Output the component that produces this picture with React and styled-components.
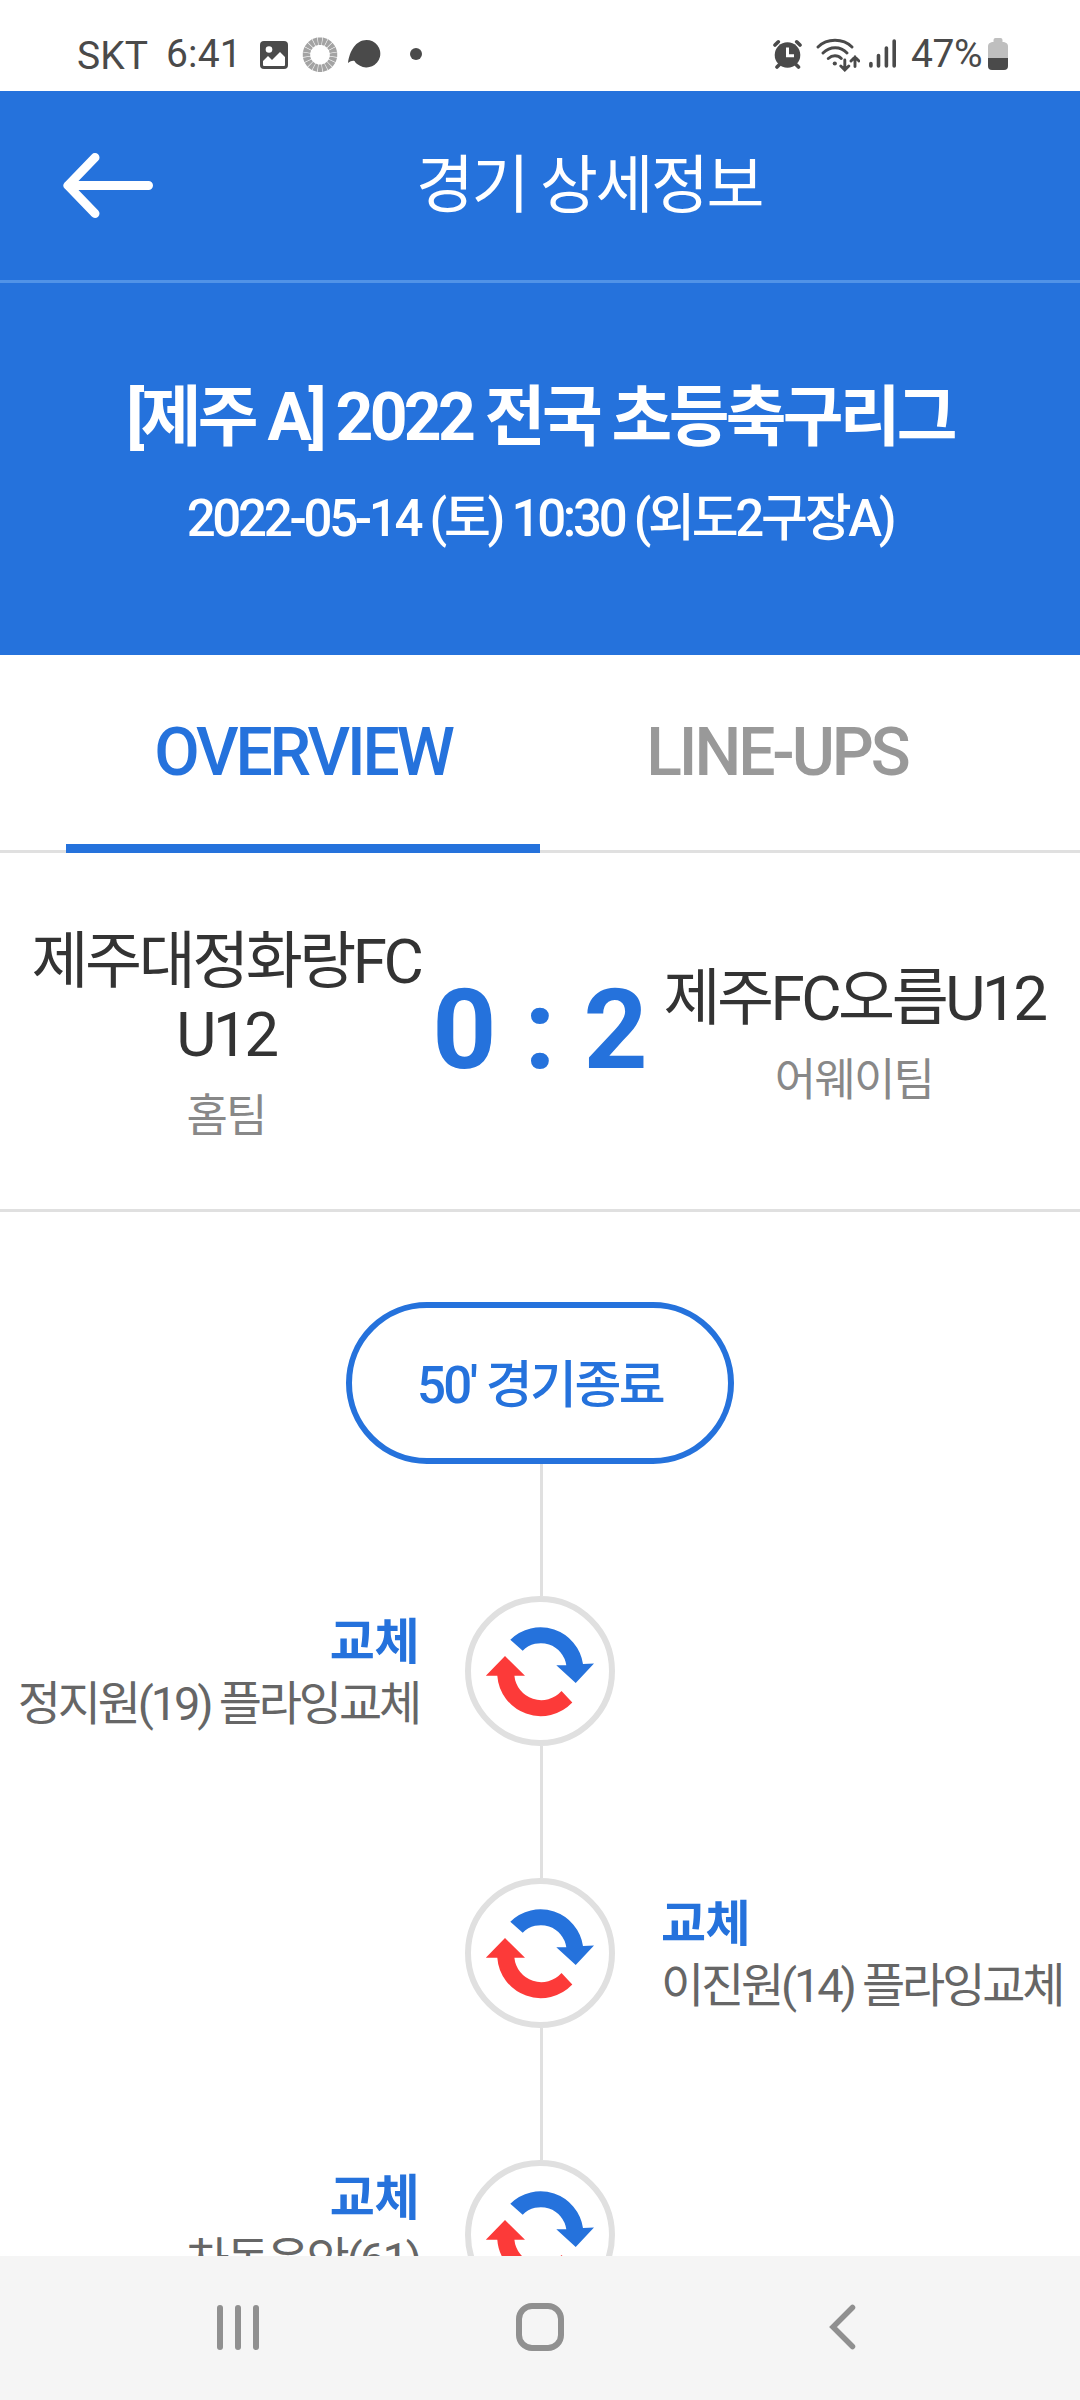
import styled, { createGlobalStyle } from "styled-components";

const GlobalStyle = createGlobalStyle`
  * {
    box-sizing: border-box;
  }

  body {
    margin: 0;

    background-color: #fff;

    font-family: Roboto, "Noto Sans CJK KR", sans-serif;
  }
`;

const Screen = styled.div`
  display: flex;
  flex-direction: column;

  width: 1080px;
  height: 2400px;

  overflow: hidden;

  background-color: #fff;
`;

const StatusBar = styled.div`
  display: flex;
  flex-shrink: 0;

  height: 91px;

  align-items: center;
  justify-content: space-between;

  padding: 17px 72px 0 77px;

  color: #4a4a4a;

  svg {
    display: block;
  }
`;

const StatusGroup = styled.div`
  display: flex;

  align-items: center;
`;

const StatusIcon = styled.span`
  margin-right: ${(props) => props.$gap || 0}px;
`;

const StatusText = styled.span`
  margin-right: ${(props) => props.$gap}px;
  padding-top: ${(props) => props.$drop || 0}px;

  font-size: 39px;
  line-height: 46px;
  letter-spacing: ${(props) => props.$spacing || 0}px;
`;

const Header = styled.header`
  display: grid;
  grid-template-columns: 219px 1fr 121px;
  flex-shrink: 0;

  height: 192px;

  align-items: center;

  border-bottom: 3px solid #5193e7;

  color: #fff;
  background-color: #2572dc;
`;

const BackButton = styled.button`
  width: 100px;

  margin-left: 58px;
  padding: 0;

  border: none;

  background: none;

  svg {
    display: block;
  }
`;

const PageTitle = styled.h1`
  margin: 0;

  font-size: 63px;
  font-weight: 400;
  line-height: 90px;
  letter-spacing: -2.5px;
  text-align: center;
`;

const MatchInfo = styled.section`
  display: flex;
  flex-direction: column;
  flex-shrink: 0;

  height: 372px;

  align-items: center;

  padding-top: 87px;

  color: #fff;
  background-color: #2572dc;

  white-space: nowrap;
`;

const League = styled.h2`
  margin: 0;

  font-size: 66px;
  font-weight: 700;
  line-height: 96px;
  letter-spacing: -3.7px;
`;

const Schedule = styled.p`
  margin: 16px 0 0;

  font-size: 51px;
  font-weight: 500;
  line-height: 74px;
  letter-spacing: -3.3px;
`;

const Tabs = styled.nav`
  display: flex;
  flex-shrink: 0;

  height: 198px;

  padding: 0 66px;

  border-bottom: 3px solid #e0e0e0;
`;

const Tab = styled.button`
  flex: 1;

  height: 198px;

  padding: 6px 0 0;

  border: none;
  border-bottom: 9px solid
    ${(props) => (props.$active ? "#2572dc" : "transparent")};

  color: ${(props) => (props.$active ? "#2572dc" : "#999")};
  background: none;

  font-family: inherit;
  font-size: 66px;
  font-weight: 500;
  letter-spacing: -3.1px;
`;

const ScoreBoard = styled.section`
  display: grid;
  grid-template-columns: 452px 176px 452px;
  flex-shrink: 0;

  height: 359px;

  align-items: center;

  padding-bottom: 2px;

  border-bottom: 3px solid #e0e0e0;
`;

const Team = styled.div`
  padding-top: 15px;

  text-align: center;
`;

const TeamName = styled.div`
  color: #333;

  font-size: 62px;
  line-height: 73px;
  letter-spacing: -3.5px;
`;

const TeamSide = styled.div`
  margin-top: 13px;

  color: #888;

  font-size: 45px;
  line-height: 66px;
  letter-spacing: -1.8px;
`;

const Score = styled.div`
  display: flex;

  justify-content: center;

  color: #2572dc;

  font-size: 112px;
  font-weight: 700;
  line-height: 130px;
  white-space: pre;
`;

const Timeline = styled.section`
  display: flex;
  flex: 1;
  flex-direction: column;

  min-height: 0;

  align-items: center;

  padding-top: 90px;

  overflow: hidden;
`;

const Milestone = styled.div`
  display: flex;
  flex-shrink: 0;

  width: 388px;
  height: 162px;

  align-items: center;
  justify-content: center;

  padding-bottom: 5px;

  border: 6px solid #2572dc;
  border-radius: 81px;

  color: #2572dc;

  font-size: 51px;
  font-weight: 500;
  letter-spacing: -2.6px;
`;

const Connector = styled.div`
  flex-shrink: 0;

  width: 3px;
  height: 132px;

  margin-left: 3px;

  background-color: #e0e0e0;
`;

const EventRow = styled.div`
  display: grid;
  grid-template-columns: 419px 150px 419px;
  flex-shrink: 0;

  height: 150px;

  justify-content: center;
  column-gap: 46px;
`;

const EventBadge = styled.div`
  grid-row: 1;
  grid-column: 2;

  width: 150px;
  height: 150px;

  border: 6px solid #e0e0e0;
  border-radius: 50%;

  svg {
    display: block;

    margin: -6px;
  }
`;

const EventText = styled.div`
  grid-row: 1;
  grid-column: ${(props) => (props.$side === "home" ? 1 : 3)};

  padding-top: ${(props) => (props.$raised ? 8 : 16)}px;

  text-align: ${(props) => (props.$side === "home" ? "right" : "left")};
  white-space: nowrap;
`;

const EventType = styled.div`
  color: #2572dc;

  font-size: 49px;
  font-weight: 700;
  line-height: 62px;
  letter-spacing: -0.5px;
`;

const EventDetail = styled.div`
  color: #666;

  font-size: 47px;
  line-height: 60px;
  letter-spacing: -3.2px;
`;

const NavigationBar = styled.footer`
  display: grid;
  grid-template-columns: 238px 302px 302px 238px;
  flex-shrink: 0;

  height: 144px;

  align-items: center;

  background-color: #f5f5f5;
`;

const NavButton = styled.button`
  display: flex;

  width: 60px;
  height: 60px;

  align-items: center;
  justify-content: center;
  justify-self: end;

  margin-right: -30px;
  padding: 0 0 2px;

  border: none;

  background: none;
`;

function NotificationIcons() {
  const dashes = Array.from({ length: 20 }, (_, i) => i * 18);

  return (
    <svg width="164" height="36" viewBox="260 36 164 36" fill="currentColor">
      <rect x="260" y="41" width="28" height="28" rx="4" />
      <circle cx="269" cy="49.5" r="3.3" fill="#fff" />
      <path
        d="M263 65v-4l5-5 4 4 8-8 5 5v8q0 1-1 1h-20q-1 0-1-1z"
        fill="#fff"
      />
      {dashes.map((angle) => (
        <path
          key={angle}
          d="M317.600 37.500h4.800l-1.100 7.400h-2.600z"
          fill="#a3a3a3"
          transform={`rotate(${angle} 320 54.7)`}
        />
      ))}
      <path d="M348 63c1.500-12 8-23 18.500-23a13.700 13.700 0 1 1-6.500 25.700c-2.300-1-4.500-2.700-5.500-4.700-2-.6-4 .2-6.500 2z" />
      <circle cx="416" cy="54" r="6" />
    </svg>
  );
}

function AlarmIcon() {
  return (
    <svg width="29" height="30" viewBox="770 39 29 30" fill="none">
      <circle cx="784.5" cy="55" r="12.8" fill="currentColor" />
      <g stroke="currentColor" strokeWidth="3.6" strokeLinecap="round">
        <path d="M772 45l3.300-3.200M797 45l-3.300-3.200M776 65l-2 2M793.500 65l2 2" />
      </g>
      <path d="M784.500 47.500v8.300h6.500" stroke="#fff" strokeWidth="3" />
    </svg>
  );
}

function WifiIcon() {
  return (
    <svg
      width="44"
      height="35"
      viewBox="813.5 36 44 35"
      fill="none"
      stroke="currentColor"
      strokeWidth="2.9"
      strokeLinecap="round"
    >
      <path d="M815.500 46c9-9 25-9 34 0M820.500 52c7-7 17.500-7 24 0M825.800 57.500c4-3.700 9.500-3.700 13 0" />
      <circle cx="832.3" cy="62.5" r="2.1" fill="currentColor" stroke="none" />
      <path d="M842.300 59v9.500M838.300 65l4 4 4-4M852.500 65.500V56M848.500 60l4-4 4 4" />
    </svg>
  );
}

function SignalIcon() {
  return (
    <svg
      width="28"
      height="30"
      viewBox="867 39 28 30"
      stroke="currentColor"
      strokeWidth="3.6"
      strokeLinecap="round"
    >
      <path d="M868.900 63.500v2.500M876.500 55.500V66M884.400 48v18M892.200 41v25" />
    </svg>
  );
}

function BatteryIcon() {
  return (
    <svg width="20" height="32" viewBox="0 0 20 32">
      <path
        d="M5.500 2q0-2 2-2h5q2 0 2 2v2h1.500q4 1 4 4v13H0V8q0-3 4-4h1.500z"
        fill="#bfbfbf"
      />
      <path d="M0 20h20v8q0 4-4 4H4q-4 0-4-4z" fill="currentColor" />
    </svg>
  );
}

function SubstitutionIcon() {
  return (
    <svg width="150" height="150" viewBox="0 0 150 150">
      <path
        d="M45.300 43.700A43 43 0 0 1 118 68L129 67.500 110.700 87 91.300 69.300H101.300A25.700 25.700 0 0 0 57.700 54.700Z"
        fill="#2572dc"
      />
      <path
        d="M107.300 106.500A43.500 43.500 0 0 1 32.300 79.700H20.800L40 60 60 79.700H49.400A27 27 0 0 0 96.500 95Z"
        fill="#fc3a39"
      />
    </svg>
  );
}

const events = [
  { id: 1, side: "home", detail: "정지원(19) 플라잉교체" },
  { id: 2, side: "away", detail: "이진원(14) 플라잉교체" },
  { id: 3, side: "home", detail: "차동윤안(61)", raised: true },
];

function MatchEvent({ side, detail, raised }) {
  return (
    <>
      <Connector />
      <EventRow>
        <EventText $side={side} $raised={raised}>
          <EventType>교체</EventType>
          <EventDetail>{detail}</EventDetail>
        </EventText>
        <EventBadge>
          <SubstitutionIcon />
        </EventBadge>
      </EventRow>
    </>
  );
}

function App() {
  return (
    <>
      <GlobalStyle />
      <Screen>
        <StatusBar>
          <StatusGroup>
            <StatusText $gap={18} $drop={4}>
              SKT
            </StatusText>
            <StatusText $gap={18} $spacing={0.2}>
              6:41
            </StatusText>
            <NotificationIcons />
          </StatusGroup>
          <StatusGroup>
            <StatusIcon $gap={14}>
              <AlarmIcon />
            </StatusIcon>
            <StatusIcon $gap={9}>
              <WifiIcon />
            </StatusIcon>
            <StatusIcon $gap={14}>
              <SignalIcon />
            </StatusIcon>
            <StatusText $gap={6} $spacing={-0.5}>
              47%
            </StatusText>
            <StatusIcon>
              <BatteryIcon />
            </StatusIcon>
          </StatusGroup>
        </StatusBar>

        <Header>
          <BackButton aria-label="뒤로">
            <svg
              width="100"
              height="72"
              viewBox="58 150 100 72"
              fill="none"
              stroke="#fff"
              strokeWidth="9"
              strokeLinecap="round"
              strokeLinejoin="round"
            >
              <path d="M148.500 185.500H68M95 157.500l-27 28 27 28" />
            </svg>
          </BackButton>
          <PageTitle>경기 상세정보</PageTitle>
        </Header>

        <MatchInfo>
          <League>[제주 A] 2022 전국 초등축구리그</League>
          <Schedule>2022-05-14 (토) 10:30 (외도2구장A)</Schedule>
        </MatchInfo>

        <Tabs>
          <Tab $active>OVERVIEW</Tab>
          <Tab>LINE-UPS</Tab>
        </Tabs>

        <ScoreBoard>
          <Team>
            <TeamName>
              제주대정화랑FC
              <br />
              U12
            </TeamName>
            <TeamSide>홈팀</TeamSide>
          </Team>
          <Score>0 : 2</Score>
          <Team>
            <TeamName>제주FC오름U12</TeamName>
            <TeamSide>어웨이팀</TeamSide>
          </Team>
        </ScoreBoard>

        <Timeline>
          <Milestone>50' 경기종료</Milestone>
          {events.map((event) => (
            <MatchEvent
              key={event.id}
              side={event.side}
              detail={event.detail}
              raised={event.raised}
            />
          ))}
        </Timeline>

        <NavigationBar>
          <NavButton aria-label="최근 앱">
            <svg width="42" height="45" viewBox="0 0 42 45" fill="#909090">
              <rect width="6" height="45" rx="3" />
              <rect x="18" width="6" height="45" rx="3" />
              <rect x="36" width="6" height="45" rx="3" />
            </svg>
          </NavButton>
          <NavButton aria-label="홈">
            <svg width="48" height="48" viewBox="0 0 48 48" fill="none">
              <rect
                x="3"
                y="3"
                width="42"
                height="42"
                rx="13"
                stroke="#909090"
                strokeWidth="6"
              />
            </svg>
          </NavButton>
          <NavButton aria-label="뒤로 가기">
            <svg
              width="27"
              height="46"
              viewBox="0 0 27 46"
              fill="none"
              stroke="#909090"
              strokeWidth="5.5"
              strokeLinecap="round"
            >
              <path d="M23.500 3.500L4 23l19.500 19.500" />
            </svg>
          </NavButton>
        </NavigationBar>
      </Screen>
    </>
  );
}

export default App;
